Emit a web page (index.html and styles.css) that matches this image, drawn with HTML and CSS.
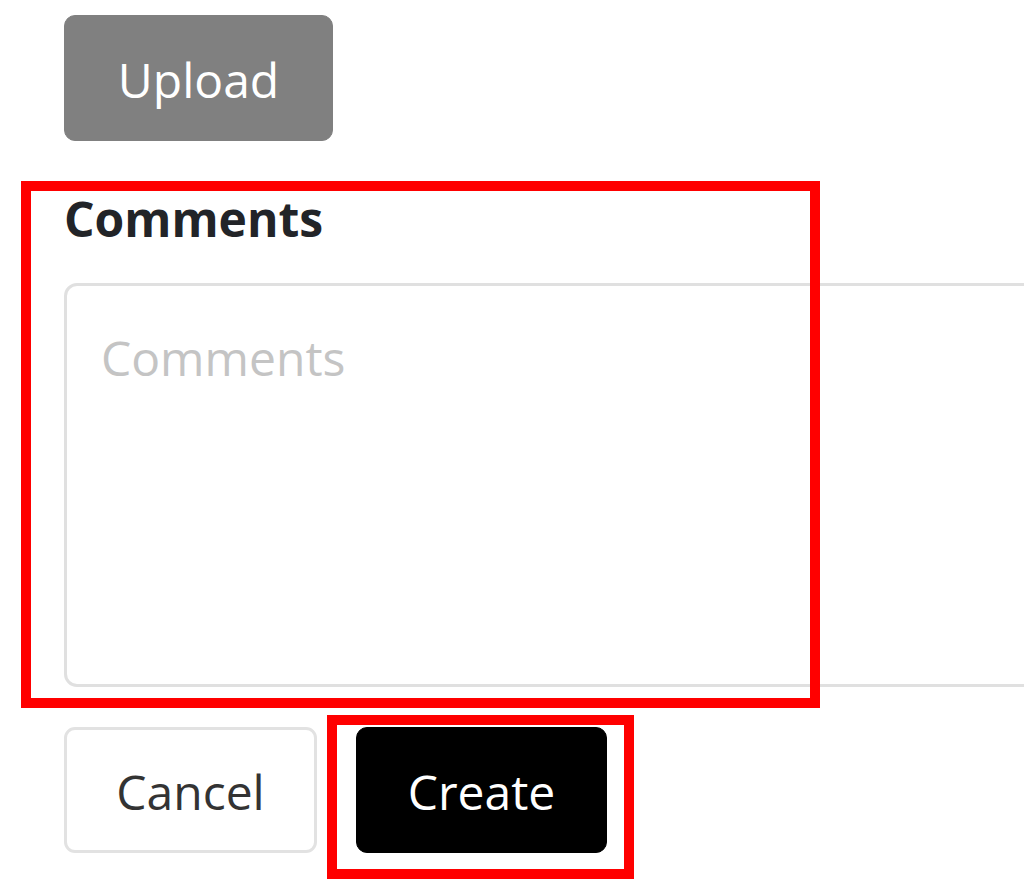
FILE: index.html
```html
<!DOCTYPE html>
<html>
<head>
<meta charset="utf-8">
<link rel="stylesheet" href="styles.css">
</head>
<body>
<div class="page">
  <button class="btn btn-upload">Upload</button>
  <div class="field">
    <label class="field-label" for="comments">Comments</label>
    <textarea id="comments" class="field-input" placeholder="Comments"></textarea>
  </div>
  <div class="actions">
    <button class="btn btn-cancel">Cancel</button>
    <button class="btn btn-create">Create</button>
  </div>
</div>
<div class="mark mark-field"></div>
<div class="mark mark-create"></div>
</body>
</html>
```
FILE: styles.css
```css
html, body {
  margin: 0;
  padding: 0;
  background: #ffffff;
  overflow: hidden;
}

body {
  font-family: "Open Sans", "Noto Sans", sans-serif;
  color: #212529;
  width: 1024px;
  height: 879px;
  position: relative;
}

.page {
  padding: 15px 0 0 64px;
  display: flex;
  flex-direction: column;
  align-items: flex-start;
}

.btn {
  font-family: "Open Sans", "Noto Sans", sans-serif;
  font-size: 48px;
  line-height: 1;
  height: 126px;
  border-radius: 11px;
  display: inline-flex;
  align-items: center;
  justify-content: center;
  padding: 4px 0 0;
  cursor: pointer;
  box-sizing: border-box;
}

.btn-upload {
  width: 269px;
  background: #808080;
  color: #ffffff;
  border: 1px solid #808080;
}

.field {
  margin-top: 38px;
  display: flex;
  flex-direction: column;
}

.field-label {
  font-size: 48px;
  font-weight: 700;
  line-height: 80px;
  color: #222428;
}

.field-input {
  margin-top: 24px;
  width: 1000px;
  height: 404px;
  box-sizing: border-box;
  border: 3px solid #e0e0e0;
  border-radius: 13px;
  padding: 32px 34px;
  font-family: "Open Sans", "Noto Sans", sans-serif;
  font-size: 48px;
  line-height: 80px;
  resize: none;
  outline: none;
}

.field-input::placeholder {
  color: #c4c4c4;
}

.actions {
  margin-top: 40px;
  display: flex;
  gap: 39px;
}

.btn-cancel {
  width: 253px;
  background: #ffffff;
  color: #333333;
  border: 3px solid #e2e2e2;
}

.btn-create {
  width: 251px;
  background: #000000;
  color: #ffffff;
  border: 1px solid #000000;
}

.mark {
  position: absolute;
  border: 10px solid #ff0000;
  box-sizing: border-box;
  pointer-events: none;
}

.mark-field {
  left: 21px;
  top: 181px;
  width: 799px;
  height: 527px;
}

.mark-create {
  left: 327px;
  top: 715px;
  width: 307px;
  height: 164px;
}
```
